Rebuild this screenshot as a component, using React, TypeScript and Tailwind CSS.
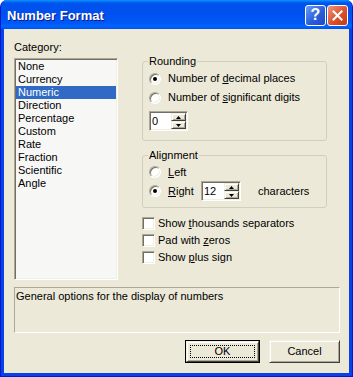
import React from 'react';

const sunken =
  'border border-t-[#aca899] border-l-[#aca899] border-r-white border-b-white shadow-[inset_1px_1px_0_#716f64,inset_-1px_-1px_0_#f1efe2]';
const raised =
  'border border-t-[#f1efe2] border-l-[#f1efe2] border-r-[#404040] border-b-[#404040] shadow-[inset_1px_1px_0_white,inset_-1px_-1px_0_#aca899]';

const Radio = ({ on }: { on?: boolean }) => (
  <span className={`w-[12px] h-[12px] shrink-0 rounded-full flex items-center justify-center bg-white ${sunken}`}>
    {on && <span className="w-[4px] h-[4px] rounded-full bg-black" />}
  </span>
);

const Check = () => <span className={`w-[13px] h-[13px] shrink-0 bg-white ${sunken}`} />;

const Arrow = ({ up }: { up?: boolean }) => (
  <svg width="5" height="3" viewBox="0 0 5 3">
    <path d={up ? 'M0 3h5L2.5 0z' : 'M0 0h5L2.5 3z'} fill="#000" />
  </svg>
);

const Spinner = ({ value, width }: { value: string; width: string }) => (
  <div className={`${width} h-[20px] flex bg-white p-[1px] ${sunken}`}>
    <span className="flex-1 pl-[1px] leading-[16px]">{value}</span>
    <div className="w-[15px] flex flex-col">
      <div className={`flex-1 flex items-center justify-center bg-[#ece9d8] ${raised}`}>
        <Arrow up />
      </div>
      <div className={`flex-1 flex items-center justify-center bg-[#ece9d8] ${raised}`}>
        <Arrow />
      </div>
    </div>
  </div>
);

const GroupBox = ({ title, className, children }: { title: string; className: string; children: React.ReactNode }) => (
  <div className={`relative border border-[#d0d0bf] rounded-[3px] ${className}`}>
    <span className="absolute -top-[7px] left-[5px] px-[1px] bg-[#ece9d8] leading-[13px]">{title}</span>
    {children}
  </div>
);

const categories = ['None', 'Currency', 'Numeric', 'Direction', 'Percentage', 'Custom', 'Rate', 'Fraction', 'Scientific', 'Angle'];

export default function App() {
  return (
    <div className="w-[353px] h-[377px] flex flex-col rounded-t-[7px] overflow-hidden bg-[#0842e6] border border-t-0 border-[#0019cf] font-['Liberation_Sans',Arial,sans-serif] text-[11px] leading-[13px] text-black">
      {/* Title bar */}
      <div className="h-[29px] -mx-[1px] shrink-0 flex items-center pl-[7px] pr-[5px] pt-[1px] bg-[linear-gradient(180deg,#0997ff_0%,#0053ee_10%,#0050ee_40%,#0058f5_80%,#0066ff_90%,#0050ee_100%)]">
        <span className="flex-1 text-white font-bold text-[13px] [text-shadow:1px_1px_0_#0a1883]">Number Format</span>
        <div className="flex gap-[1px]">
          <div className="w-[21px] h-[21px] rounded-[3px] border border-white bg-[linear-gradient(135deg,#6d9cf7,#2a5fdc_55%,#1c47c6)] flex items-center justify-center text-white font-bold text-[16px] leading-none">
            ?
          </div>
          <div className="w-[21px] h-[21px] rounded-[3px] border border-white bg-[linear-gradient(135deg,#f0977a,#dc502c_55%,#c23a16)] flex items-center justify-center">
            <svg width="11" height="11" viewBox="0 0 11 11">
              <path d="M1.5 1.5l8 8M9.5 1.5l-8 8" stroke="#fff" strokeWidth="2" strokeLinecap="square" />
            </svg>
          </div>
        </div>
      </div>

      {/* Client area */}
      <div className="flex-1 mx-[3px] mb-[3px] bg-[#ece9d8] flex flex-col pl-[10px] pr-[9px] pt-[12px]">
        <div className="flex h-[239px]">
          <div className="w-[104px] flex flex-col">
            <span className="mb-[4px]">Category:</span>
            <div className={`h-[222px] bg-[#f7f7f6] p-[1px] ${sunken}`}>
              {categories.map((c) => (
                <div
                  key={c}
                  className={`h-[13px] pl-[2px] leading-[13px] ${c === 'Numeric' ? 'bg-[#316ac5] text-white' : ''}`}
                >
                  {c}
                </div>
              ))}
            </div>
          </div>

          <div className="ml-[24px] w-[185px] flex flex-col">
            <GroupBox title="Rounding" className="mt-[20px] pl-[6px] pt-[7px] pb-[9px]">
              <div className="flex items-center gap-[7px] h-[19px]">
                <Radio on />
                <span>
                  Number of <u>d</u>ecimal places
                </span>
              </div>
              <div className="flex items-center gap-[7px] h-[19px]">
                <Radio />
                <span>
                  Number of <u>s</u>ignificant digits
                </span>
              </div>
              <div className="mt-[4px]">
                <Spinner value="0" width="w-[39px]" />
              </div>
            </GroupBox>

            <GroupBox title="Alignment" className="mt-[14px] pl-[6px] pt-[7px] pb-[6px]">
              <div className="flex items-center gap-[7px] h-[18px]">
                <Radio />
                <span>
                  <u>L</u>eft
                </span>
              </div>
              <div className="flex items-center h-[20px]">
                <Radio on />
                <span className="ml-[7px] w-[33px]">
                  <u>R</u>ight
                </span>
                <Spinner value="12" width="w-[40px]" />
                <span className="ml-[17px]">characters</span>
              </div>
            </GroupBox>

            <div className="mt-[7px] flex flex-col">
              <div className="flex items-center gap-[3px] h-[17px]">
                <Check />
                <span>
                  Show <u>t</u>housands separators
                </span>
              </div>
              <div className="flex items-center gap-[3px] h-[17px]">
                <Check />
                <span>
                  Pad with <u>z</u>eros
                </span>
              </div>
              <div className="flex items-center gap-[3px] h-[17px]">
                <Check />
                <span>
                  Show <u>p</u>lus sign
                </span>
              </div>
            </div>
          </div>
        </div>

        <div className="mt-[7px] w-[326px] h-[46px] pl-[1px] pt-[2px] border border-t-[#aca899] border-l-[#aca899] border-r-white border-b-white">
          General options for the display of numbers
        </div>

        <div className="mt-[7px] flex justify-end gap-[9px]">
          <div className="w-[75px] h-[23px] border border-black">
            <div className={`h-full bg-[#ece9d8] flex items-center justify-center p-[3px] ${raised}`}>
              <div className="w-full h-full border border-dotted border-black flex items-center justify-center">OK</div>
            </div>
          </div>
          <div className={`w-[71px] h-[23px] bg-[#ece9d8] flex items-center justify-center ${raised}`}>Cancel</div>
        </div>
      </div>
    </div>
  );
}
